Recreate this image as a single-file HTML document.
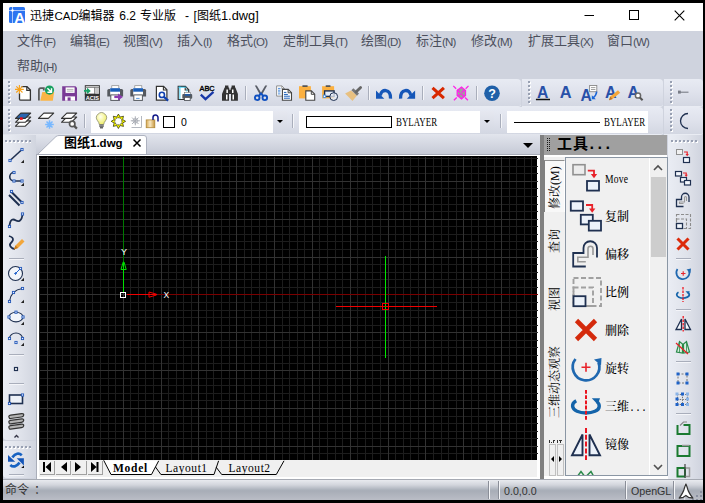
<!DOCTYPE html><html lang="zh-CN"><head><meta charset="utf-8"><title>迅捷CAD编辑器 6.2 专业版 - [图纸1.dwg]</title><style>
html,body{margin:0;padding:0}
body{width:705px;height:503px;background:#000;position:relative;overflow:hidden;font-family:"Liberation Sans","Noto Sans CJK SC",sans-serif;font-size:12px;color:#000}
body>*, #plist>*{position:absolute}
.i{position:absolute;overflow:visible}
#win{left:3px;top:3px;width:700px;height:497px;background:#cfd3de}
#title{left:3px;top:3px;width:700px;height:28px;background:#fff}
#ttext{left:0;top:7px;width:300px;height:18px}
#ttext span{position:absolute;top:0;line-height:18px;white-space:pre;color:#000}
#menu{left:3px;top:31px;width:700px;height:48px;background:#cfd3de}
.mi{font-size:13px;line-height:16px;color:#4b4f5c;white-space:nowrap}
.mi span{font-size:11.500px;letter-spacing:-.8px;position:relative;top:.5px}
.tb{background:linear-gradient(#e8ebf3,#dfe2ec 50%,#d3d7e2);border-radius:0 4px 3px 0;box-shadow:0 1px 0 #e9ecf3}
.gv{width:3px;height:23px;background:repeating-linear-gradient(#98a0b2 0 2px,transparent 2px 4px) 0 0/2px 100% no-repeat,repeating-linear-gradient(transparent 0 1px,#fff 1px 3px,transparent 3px 4px) 1px 0/2px 100% no-repeat}
.gh{height:3px;background:repeating-linear-gradient(90deg,#98a0b2 0 2px,transparent 2px 4px) 0 0/100% 2px no-repeat,repeating-linear-gradient(90deg,transparent 0 1px,#fff 1px 3px,transparent 3px 4px) 0 1px/100% 2px no-repeat}
.sv{width:1px;height:14px;background:#a9aebb;box-shadow:1px 0 0 #f4f5f9}
.sh{width:15px;height:1px;background:#a9aebb;box-shadow:0 1px 0 #f4f5f9}
.combo{top:111px;height:22px;background:#fff}
.combo .dd{position:absolute;right:0;top:0;width:14px;height:22px;background:linear-gradient(#e6e8f0,#d4d8e3)}
.combo .dd::after{content:"";position:absolute;left:4px;top:9px;border:3px solid transparent;border-top:3px solid #000;border-bottom:0}
.sq{border:1px solid #000;background:#fff}
.ct{white-space:nowrap;line-height:14px}
.by{font-family:"Liberation Serif",serif;font-size:12px;transform:scaleX(.74);transform-origin:0 0}
#tabstrip{left:3px;top:134px;width:538px;height:21px;background:linear-gradient(#e2e5ed,#c6cad6);border-bottom:1px solid #a8acb8;box-sizing:border-box}
#tabtxt{left:64px;top:134px;font-weight:bold;font-size:13px;line-height:17px;white-space:nowrap}
#tabtxt span{font-size:11.5px}
.ltb{background:linear-gradient(90deg,#eaedf4,#dfe2ea 55%,#d1d5df);border-radius:0 0 4px 4px}
#cvwrap{left:36px;top:155px;width:505px;height:324px;background:#fff;border-left:1px solid #aaaeb9;box-sizing:border-box}
#ltabs{left:39px;top:460px;width:498px;height:17px;background:#f0f0f0}
.nb{top:460px;width:15px;height:14px;background:#f0f0f0;box-shadow:1px 1px 0 #a0a0a0}
.lt{top:462px;font-family:"Liberation Serif",serif;font-size:11.5px;line-height:13px;letter-spacing:.55px;white-space:nowrap}
.lt.b{font-weight:bold;letter-spacing:.75px}
#split{left:540px;top:135px;width:4px;height:344px;background:#808080}
#phead{left:544px;top:135px;width:123px;height:20px;background:#a0a0a0}
.gv2{width:3px;height:12px;background:repeating-linear-gradient(#222 0 1px,transparent 1px 2px),repeating-linear-gradient(90deg,#222 0 1px,transparent 1px 2px);background-blend-mode:normal}
#ptitle{left:557px;top:134px;font-weight:bold;font-size:15px;line-height:20px;letter-spacing:1px;white-space:nowrap}
#ptitle span{font-family:"Liberation Mono",monospace;font-size:16px;letter-spacing:-1.600px;margin-left:-2px}
#pbody{left:544px;top:155px;width:123px;height:324px;background:#f0f0f0;border-top:2px solid #fff;box-sizing:border-box}
#vtabs{left:544px;top:157px;width:21px;height:321px;background:#f0f0f0;border-right:1px solid #8a96a4}
#vsel{left:544px;top:160px;width:21px;height:52px;background:#f8f8f8;border-top:1px solid #909090;border-left:1.500px solid #808080;border-right:1.500px solid #fff;box-sizing:border-box}
.vt{height:14px;line-height:14px;white-space:nowrap;text-align:center;transform:rotate(-90deg);font-family:"Liberation Serif","Noto Serif CJK SC",serif;font-size:12px}
.vsb{top:444px;width:7px;height:32px;background:#f0f0f0;border:1px solid #c0c0c0;box-sizing:border-box}
#plist{left:0;top:0;width:705px;height:477px;clip-path:inset(158px 55px 2px 566px)}
.pl{left:605px;font-family:"Liberation Serif","Noto Serif CJK SC",serif;font-weight:500;font-size:12px;line-height:14px;white-space:nowrap}
.pl.lat{font-size:12px;transform:scaleX(.8);transform-origin:0 0;letter-spacing:.3px}
#sbar{left:649px;top:158px;width:17px;height:317px;background:#f0f0f0;border-left:1px solid #fff}
#sthumb{left:651px;top:177px;width:15px;height:80px;background:#cdcdcd}
.rtb{left:668px;top:135px;width:35px;height:344px;background:linear-gradient(90deg,#eaedf4,#dfe2ea 55%,#cfd3de)}
#status{left:3px;top:479px;width:700px;height:21px;background:linear-gradient(#a6aab3 0,#a6aab3 1.500px,#e6e8ed 1.500px,#d2d5dc 6px,#aab0ba 11px,#a8adb7 12px,#babdc6 21px)}
.st{top:484px;font-size:10.67px;line-height:14px;color:#333;white-space:nowrap}
.ss{top:481px;width:1px;height:18px;background:#8a8e98;box-shadow:1px 0 0 #f4f5f8}
.dots{font-family:"Liberation Mono",monospace;font-size:10px;font-weight:400}

</style></head><body>
<div id="win"></div>
<div id="title"></div>
<svg class="i" style="left:9px;top:7px" width="16" height="16" viewBox="0 0 16 16"><rect x="0" y="0" width="16" height="16" rx="1.500" fill="#2b74f0"/><path d="M3.500 0v16" stroke="#cfe0ff" stroke-width=".8"/><path d="M0 3.500h16" stroke="#cfe0ff" stroke-width=".8"/><circle cx="3.500" cy="3.500" r="1.200" fill="#fff"/><text x="10.600" y="16" font-family="Liberation Sans,sans-serif" font-size="15" font-weight="bold" fill="#fff" text-anchor="middle">A</text></svg>
<div id="ttext"><span style="left:30px;font-size:12px">迅捷</span><span style="left:54.5px;font-size:11.5px">CAD</span><span style="left:78.5px;font-size:12px">编辑器 </span><span style="left:119.3px;font-size:12px">6.2 </span><span style="left:140px;font-size:12px">专业版 </span><span style="left:185px;font-size:12px">- </span><span style="left:193.5px;font-size:12px">[</span><span style="left:197px;font-size:12px">图纸</span><span style="left:221px;font-size:12.8px">1.dwg]</span></div>
<svg class="i" style="left:575px;top:3px" width="128" height="28" viewBox="0 0 128 28"><path d="M9.500 12.500h9.500" stroke="#000" fill="none"/><rect x="54.500" y="7.500" width="9" height="9" stroke="#000" fill="none"/><path d="M99.700 7.700l9.600 9.600M109.300 7.700L99.700 17.300" stroke="#000" stroke-width="1.100" fill="none"/></svg>
<div id="menu"></div>
<div class="mi" style="left:17px;top:33px">文件<span>(F)</span></div>
<div class="mi" style="left:70px;top:33px">编辑<span>(E)</span></div>
<div class="mi" style="left:123px;top:33px">视图<span>(V)</span></div>
<div class="mi" style="left:177px;top:33px">插入<span>(I)</span></div>
<div class="mi" style="left:227px;top:33px">格式<span>(O)</span></div>
<div class="mi" style="left:283px;top:33px">定制工具<span>(T)</span></div>
<div class="mi" style="left:361px;top:33px">绘图<span>(D)</span></div>
<div class="mi" style="left:416px;top:33px">标注<span>(N)</span></div>
<div class="mi" style="left:471px;top:33px">修改<span>(M)</span></div>
<div class="mi" style="left:528px;top:33px">扩展工具<span>(X)</span></div>
<div class="mi" style="left:607px;top:33px">窗口<span>(W)</span></div>
<div class="mi" style="left:17px;top:58px">帮助<span>(H)</span></div>
<div class="tb" style="left:3px;top:79px;width:517.500px;height:27px"></div>
<div class="tb" style="left:521.500px;top:79px;width:141px;height:27px"></div>
<div class="tb" style="left:663.500px;top:79px;width:39.500px;height:27px"></div>
<div class="tb" style="left:3px;top:107px;width:659.500px;height:27px"></div>
<div class="tb" style="left:663.500px;top:107px;width:39.500px;height:27px"></div>
<div class="gv" style="left:8px;top:81px"></div>
<div class="gv" style="left:528px;top:81px"></div>
<div class="gv" style="left:670px;top:81px"></div>
<div class="gv" style="left:8px;top:109px"></div>
<div class="gv" style="left:670px;top:109px"></div>
<svg class="i" style="left:15px;top:85px" width="16" height="16" viewBox="0 0 16 16"><path d="M6.500 1.700h5.500l3.400 3.400v10.100h-9.600q-1.300 0-1.300-1.300V8" fill="#fff" stroke="#333" stroke-width="1.300"/><path d="M11.800 1.700v3.600h3.600" fill="none" stroke="#333" stroke-width="1.200"/><path d="M4.400 0v8.800M0 4.400h8.800M1.300 1.300l6.200 6.200M7.500 1.300L1.300 7.500" stroke="#f7a21b" stroke-width="1.100"/></svg>
<svg class="i" style="left:38px;top:85px" width="16" height="16" viewBox="0 0 16 16"><path d="M0.900 15.400V5q0-1.900 1.900-1.900H5.800V5.600" fill="none" stroke="#5a5a5a" stroke-width="1.800"/><path d="M2.300 15.700L4.300 7H16.200l-1.400 8.700z" fill="#fbb445"/><circle cx="11.500" cy="5.100" r="4.600" fill="#18a060"/><path d="M9.400 3.200l3.600 3.600M13.500 3.200v4.100H9.400" stroke="#fff" stroke-width="1.400" fill="none"/></svg>
<svg class="i" style="left:61px;top:85px" width="16" height="16" viewBox="0 0 16 16"><path d="M1.200 1.200H14.500L16 2.700V15.700H1.200z" fill="#7a3a96"/><rect x="4.600" y="2.400" width="9" height="5.500" fill="#fff"/><path d="M5.800 4.400h6.600M5.800 6.100h6.600" stroke="#aaa" stroke-width=".9"/><rect x="4.100" y="11.400" width="9.900" height="4.300" fill="#fff"/><rect x="6.600" y="12.400" width="3" height="3.300" fill="#7a3a96"/></svg>
<svg class="i" style="left:84px;top:85px" width="16" height="16" viewBox="0 0 16 16"><rect x="1.300" y="0.700" width="14.100" height="8.500" fill="#fff" stroke="#333" stroke-width="1"/><path d="M1.300 2.300h14.100" stroke="#777" stroke-width="1"/><rect x="11.400" y="3" width="3.600" height="5.700" fill="#c8c8c8"/><path d="M10.700 2.500v6.500" stroke="#555" stroke-width=".8"/><path d="M0 5.900h4.300M2.900 3.600l2.600 2.300-2.600 2.300" stroke="#1aa268" stroke-width="1.700" fill="none"/><rect x="0.800" y="8.900" width="15.100" height="6.800" fill="#333"/><text x="8.400" y="14.800" font-family="Liberation Sans,sans-serif" font-size="6.200" font-weight="bold" fill="#fff" text-anchor="middle" textLength="13.400" lengthAdjust="spacingAndGlyphs">ACIS</text></svg>
<svg class="i" style="left:107px;top:85px" width="16" height="16" viewBox="0 0 16 16"><rect x="4.800" y="0.700" width="7" height="3" fill="#fff" stroke="#888" stroke-width=".7"/><path d="M0.300 11.400V5.400q0-1.500 1.500-1.500H14.600q1.500 0 1.500 1.500V11.400z" fill="#55595f"/><rect x="3.200" y="3.200" width="9.800" height="7" fill="#fff"/><rect x="3.200" y="3.200" width="9.800" height="3.500" fill="#1a5eb8"/><rect x="3.8" y="9.900" width="8.6" height="5.500" fill="#fff" stroke="#55595f" stroke-width="1"/><path d="M7.300 11.900h5.500" stroke="#8a3ab0" stroke-width="2.400"/><path d="M11 8.400l4.900 3.500-4.900 3.500z" fill="#8a3ab0"/></svg>
<svg class="i" style="left:130px;top:85px" width="16" height="16" viewBox="0 0 16 16"><rect x="4.800" y="0.700" width="7" height="3" fill="#fff" stroke="#888" stroke-width=".7"/><path d="M0.300 11.400V5.400q0-1.500 1.500-1.500H14.600q1.500 0 1.500 1.500V11.400z" fill="#55595f"/><rect x="3.200" y="3.200" width="9.800" height="7" fill="#fff"/><rect x="3.200" y="3.200" width="9.800" height="3.500" fill="#1a5eb8"/><rect x="3.8" y="9.900" width="8.6" height="5.500" fill="#fff" stroke="#55595f" stroke-width="1"/><path d="M6.100 13.400h3.500" stroke="#5a9ae0" stroke-width="1"/></svg>
<svg class="i" style="left:153px;top:85px" width="16" height="16" viewBox="0 0 16 16"><path d="M3.400 1.400h7.200l3.300 3.400v10.300H3.400z" fill="#fff" stroke="#333" stroke-width="1.200"/><path d="M10.400 1.400v3.600h3.500" fill="none" stroke="#333" stroke-width="1.100"/><circle cx="8.900" cy="9.900" r="2.600" fill="#fff" stroke="#1040b0" stroke-width="1.600"/><path d="M10.900 11.900l4.300 3.700" stroke="#1040b0" stroke-width="2.100"/></svg>
<svg class="i" style="left:176px;top:85px" width="16" height="16" viewBox="0 0 16 16"><path d="M2.200 1.400h7.200l3.300 3.400v9.700H2.200z" fill="#fff" stroke="#333" stroke-width="1.200"/><path d="M9.200 1.400v3.600h3.500" fill="none" stroke="#333" stroke-width="1.100"/><path d="M3.900 1.400V14.200M2.400 2.200h8M10.800 4.500v2" stroke="#30c8f0" stroke-width=".9" fill="none"/><rect x="8.300" y="7.400" width="6" height="2.500" fill="#fff" stroke="#777" stroke-width=".6"/><rect x="6.300" y="9" width="9.900" height="4.800" rx="1" fill="#55595f"/><rect x="8.800" y="9.200" width="5.400" height="1.500" fill="#1a5eb8"/><rect x="8.500" y="12.400" width="5.700" height="3.100" fill="#fff" stroke="#55595f" stroke-width=".9"/></svg>
<svg class="i" style="left:199px;top:85px" width="16" height="16" viewBox="0 0 16 16"><text x="8.100" y="5.500" font-family="Liberation Sans,sans-serif"  font-size="7" fill="#000" stroke="#000" stroke-width=".35" text-anchor="middle" textLength="15.200" lengthAdjust="spacingAndGlyphs">ABC</text><path d="M1.800 9.600l4.700 4.500 8-7.200" stroke="#1838a8" stroke-width="2.300" fill="none"/></svg>
<svg class="i" style="left:222px;top:85px" width="16" height="16" viewBox="0 0 16 16"><path d="M3 .5h3.400v2.500H3zM9.600 .5H13v2.500H9.600z" fill="#333"/><path d="M2.600 2.500h4.400l.6 2.500h.8l.6-2.500h4.400L15.900 9v6.700H9V9H7v6.700H0V9z" fill="#333"/><path d="M4.400 4.500h1.500V8H4.400zM10 4.500h1.500V8H10zM4 9.500h1.500v5H4zM10.500 9.500H12v5h-1.500z" fill="#fff"/></svg>
<div class="sv" style="left:245px;top:86px"></div>
<svg class="i" style="left:253px;top:85px" width="16" height="16" viewBox="0 0 16 16"><path d="M1.800 .5h2l5.600 9.500-2 .5zM14.200 .5h-2L6.600 10l2 .5z" fill="#5a5e68"/><circle cx="4.200" cy="12.800" r="2.300" fill="none" stroke="#1050c0" stroke-width="1.900"/><circle cx="11.800" cy="12.800" r="2.300" fill="none" stroke="#1050c0" stroke-width="1.900"/><path d="M5.500 11.200L8 8.500l2.500 2.700" stroke="#1050c0" stroke-width="1.900" fill="none"/></svg>
<svg class="i" style="left:276px;top:85px" width="16" height="16" viewBox="0 0 16 16"><path d="M0.600 0.900h5.300l2.500 2.500v7.700H0.600z" fill="#fff" stroke="#888" stroke-width=".9"/><path d="M5.800 .9v2.600h2.600" fill="none" stroke="#888" stroke-width=".8"/><path d="M2 3.400h2.500M2 5.200h2.500M2 6.900h2.500M2 8.900h2.500" stroke="#3a80d8" stroke-width=".9"/><path d="M6.400 4.400h5.800l3.300 3.300v7.600H6.400z" fill="#fff" stroke="#444" stroke-width="1.100"/><path d="M12.100 4.400v3.400h3.400" fill="none" stroke="#444" stroke-width="1"/><path d="M7.900 7.400h2.500M7.900 9.400h4M7.900 11.200h6M7.900 13.200h6" stroke="#1a5eb8" stroke-width="1"/></svg>
<svg class="i" style="left:299px;top:85px" width="16" height="16" viewBox="0 0 16 16"><rect x="0" y="1.200" width="11.900" height="12.200" fill="#fbb040"/><rect x="3.300" y="0.200" width="5.400" height="1.700" rx=".6" fill="#555"/><path d="M6.800 5.900h5.600l3.300 3.300v6.100H6.800z" fill="#fff" stroke="#444" stroke-width="1.100"/><path d="M12.300 5.900v3.400h3.400" fill="none" stroke="#444" stroke-width="1"/></svg>
<svg class="i" style="left:322px;top:85px" width="16" height="16" viewBox="0 0 16 16"><rect x="0.100" y="1.200" width="12" height="12.200" fill="#fbb040"/><rect x="3.600" y="0.200" width="5" height="1.700" rx=".6" fill="#555"/><rect x="2.600" y="5.900" width="9.500" height="5.500" fill="#e8eef8" stroke="#1f3050" stroke-width="1.400"/><circle cx="11.700" cy="11.600" r="3.900" fill="#e8eef8" fill-opacity=".75" stroke="#1f3050" stroke-width="1"/><rect x="1.300" y="10.100" width="2.400" height="2.400" fill="#fff" stroke="#4a90e0" stroke-width=".9"/></svg>
<svg class="i" style="left:345px;top:85px" width="16" height="16" viewBox="0 0 16 16"><path d="M6 5.600L0.100 8.600 7.500 16 12 10.600z" fill="#e8c080"/><path d="M6.400 5.200L8.400 3.300 14 8.500 12 10.800z" fill="#777"/><path d="M11.200 6.800L15.600 2.400" stroke="#666" stroke-width="2.800" stroke-linecap="round"/></svg>
<div class="sv" style="left:368px;top:86px"></div>
<svg class="i" style="left:376px;top:85px" width="16" height="16" viewBox="0 0 16 16"><path d="M0 5.600v8.100h8.300z" fill="#1556b8"/><path d="M4.300 10.500C5 3.500 15 3.200 14.500 13.700" fill="none" stroke="#1556b8" stroke-width="3.300"/></svg>
<svg class="i" style="left:399px;top:85px" width="16" height="16" viewBox="0 0 16 16"><g transform="translate(16.100 0) scale(-1 1)"><path d="M0 5.600v8.100h8.300z" fill="#1556b8"/><path d="M4.300 10.500C5 3.500 15 3.200 14.500 13.700" fill="none" stroke="#1556b8" stroke-width="3.300"/></g></svg>
<div class="sv" style="left:422px;top:86px"></div>
<svg class="i" style="left:430px;top:85px" width="16" height="16" viewBox="0 0 16 16"><path d="M2.500 2.900l11.400 10.300M13.900 2.900L2.500 13.200" stroke="#d82800" stroke-width="3.100" fill="none"/></svg>
<svg class="i" style="left:453px;top:85px" width="16" height="16" viewBox="0 0 16 16"><path d="M4.200 5.500l4.300-3.300 4 3.300v5l-4 3.300-4.300-3.300z" fill="#a0a0a0" stroke="#ff22e8" stroke-width="1.300"/><path d="M0.300 0.900l15.200 15M15.500 .9L0.300 15.900" stroke="#ff22e8" stroke-width="1.300" stroke-dasharray="4 1.500" fill="none"/></svg>
<div class="sv" style="left:476px;top:86px"></div>
<svg class="i" style="left:484px;top:85px" width="16" height="16" viewBox="0 0 16 16"><circle cx="8" cy="8.200" r="7.800" fill="#2060a8"/><text x="8" y="12.800" font-family="Liberation Sans,sans-serif" font-size="12.500" font-weight="bold" fill="#fff" text-anchor="middle">?</text></svg>
<svg class="i" style="left:535px;top:85px" width="16" height="16" viewBox="0 0 16 16"><text x="7.7" y="12.6" font-family="Liberation Sans,sans-serif" font-size="15.8" font-weight="bold" fill="#2850a8" text-anchor="middle">A</text><path d="M0.900 14.500h14.100" stroke="#111" stroke-width="1.500"/></svg>
<svg class="i" style="left:558px;top:85px" width="16" height="16" viewBox="0 0 16 16"><text x="7.6" y="13" font-family="Liberation Sans,sans-serif" font-size="16.4" font-weight="bold" fill="#2850a8" text-anchor="middle">A</text></svg>
<svg class="i" style="left:581px;top:85px" width="16" height="16" viewBox="0 0 16 16"><text x="5.1" y="16" font-family="Liberation Sans,sans-serif" font-size="15.6" font-weight="bold" fill="#2850a8" text-anchor="middle">A</text><rect x="8.600" y="0.500" width="7.200" height="6.200" fill="#fff" stroke="#888" stroke-width=".9"/><path d="M10 2.600h4.400M10 4.500h4.400" stroke="#888" stroke-width=".8"/><path d="M15.700 6.600Q15.500 10 12 13" stroke="#1a66d8" stroke-width="1.500" fill="none"/><path d="M10.800 10.200v4h4z" fill="#1a66d8"/></svg>
<svg class="i" style="left:604px;top:85px" width="16" height="16" viewBox="0 0 16 16"><text x="6.8" y="12.5" font-family="Liberation Sans,sans-serif" font-size="16" font-weight="bold" fill="#2850a8" text-anchor="middle">A</text><path d="M5 15.200l1.300-3.600 7.700-6.400 2.200 2.600-7.700 6.300z" fill="#f5a73a"/><path d="M5 15.200l1.300-3.600 2.200 2.500z" fill="#b8722a"/></svg>
<svg class="i" style="left:627px;top:85px" width="16" height="16" viewBox="0 0 16 16"><text x="6.3" y="12.5" font-family="Liberation Sans,sans-serif" font-size="16" font-weight="bold" fill="#2850a8" text-anchor="middle">A</text><circle cx="11" cy="10.500" r="2.600" fill="#fff" stroke="#666" stroke-width="1.500"/><path d="M12.900 12.500l2.700 2.800" stroke="#555" stroke-width="2"/></svg>
<svg class="i" style="left:677px;top:85px" width="16" height="16" viewBox="0 0 16 16"><rect x="1" y="5.600" width="2.800" height="3" fill="#787c86"/><path d="M3 7.200h8.500" stroke="#787c86" stroke-width="1.100"/></svg>
<svg class="i" style="left:677px;top:113px" width="16" height="16" viewBox="0 0 16 16"><path d="M11 .5A7.500 7.500 0 0 0 11 15.500" fill="none" stroke="#1f3050" stroke-width="1.300"/></svg>
<svg class="i" style="left:15px;top:112px" width="16" height="16" viewBox="0 0 16 16"><path d="M0.500 14.2 L5.800 8.9 H15.700 L10.300 14.2 z" fill="#fff" stroke="#333" stroke-width="1.100" stroke-linejoin="round"/><path d="M0.500 10.3 L5.800 5 H15.700 L10.300 10.3 z" fill="#fff" stroke="#333" stroke-width="1.100" stroke-linejoin="round"/><path d="M0.500 6.4 L5.800 1.1 H15.700 L10.300 6.4 z" fill="#2a66b0" stroke="#333" stroke-width="1.100" stroke-linejoin="round"/><rect x="5" y="5.300" width="2.700" height="2.600" fill="#e8101c"/></svg>
<svg class="i" style="left:38px;top:112px" width="16" height="16" viewBox="0 0 16 16"><path d="M0.500 6.4 L5.800 1.1 H15.700 L10.300 6.4 z" fill="#fff" stroke="#333" stroke-width="1.100" stroke-linejoin="round"/><path d="M11.500 8.200v8.600M7.200 12.500h8.600M8.500 9.500l6 6M14.500 9.500l-6 6" stroke="#78b8ff" stroke-width="1.500"/></svg>
<svg class="i" style="left:61px;top:112px" width="16" height="16" viewBox="0 0 16 16"><path d="M0.500 10.3 L5.800 5 H15.700 L10.300 10.3 z" fill="#fff" stroke="#333" stroke-width="1.100" stroke-linejoin="round"/><path d="M0.500 6.4 L5.800 1.1 H15.700 L10.300 6.4 z" fill="#fff" stroke="#333" stroke-width="1.100" stroke-linejoin="round"/><circle cx="11.200" cy="11.900" r="2.700" fill="#fff" stroke="#555" stroke-width="1.700"/><path d="M13.200 13.900l2.700 2.700" stroke="#555" stroke-width="2.200"/></svg>
<div class="sv" style="left:84px;top:114px"></div>
<div class="combo" style="left:91px;width:196px"><div class="dd"></div></div>
<svg class="i" style="left:93px;top:113px" width="16" height="16" viewBox="0 0 16 16"><defs><radialGradient id="bg1" cx=".4" cy=".35" r=".7"><stop offset="0" stop-color="#fffff0"/><stop offset="1" stop-color="#eeee60"/></radialGradient></defs><path d="M6.300 11.500Q6 9.300 4.500 7.700A5 5 0 1 1 12.500 7.700Q11 9.300 10.700 11.500z" fill="url(#bg1)" stroke="#8a8a70" stroke-width=".8"/><rect x="6.300" y="11.500" width="4.400" height="2.600" fill="#666"/><path d="M6.300 12.800h4.400" stroke="#bbb" stroke-width=".6"/><path d="M7 14.800h3" stroke="#444" stroke-width="1.200"/></svg>
<svg class="i" style="left:110px;top:113px" width="16" height="16" viewBox="0 0 16 16"><path d="M8.40 1.10 L10.16 4.05 L13.49 3.21 L12.65 6.54 L15.60 8.30 L12.65 10.06 L13.49 13.39 L10.16 12.55 L8.40 15.50 L6.64 12.55 L3.31 13.39 L4.15 10.06 L1.20 8.30 L4.15 6.54 L3.31 3.21 L6.64 4.05 z" fill="#ffff00" stroke="#202000" stroke-width=".7"/><circle cx="8.400" cy="8.300" r="3.600" fill="#fffff4" stroke="#111" stroke-width=".9" stroke-dasharray="1 .6"/></svg>
<svg class="i" style="left:128px;top:113px" width="16" height="16" viewBox="0 0 16 16"><path d="M13.500 3v11.500H3.500" fill="none" stroke="#b4b8c0" stroke-width="1"/><path d="M7.300 3.300v9M2.800 7.800h9M4.100 4.600l6.400 6.400M10.500 4.600l-6.400 6.400" stroke="#a8acb4" stroke-width="1"/><circle cx="7.300" cy="7.800" r="2.300" fill="none" stroke="#a8acb4" stroke-width=".8"/></svg>
<svg class="i" style="left:145px;top:113px" width="16" height="16" viewBox="0 0 16 16"><defs><linearGradient id="lg1" x1="0" x2="1"><stop offset="0" stop-color="#d8a850"/><stop offset=".45" stop-color="#f8e8c4"/><stop offset="1" stop-color="#c89840"/></linearGradient></defs><rect x="1.200" y="6.900" width="8.600" height="7.800" fill="url(#lg1)" stroke="#b08838" stroke-width=".8"/><path d="M8 7V4.600A2.500 2.500 0 0 1 13 4.600V8.600" fill="none" stroke="#101888" stroke-width="1.500"/></svg>
<div class="sq" style="left:163px;top:116px;width:10px;height:10px"></div>
<div class="ct" style="left:181px;top:115px;font-size:10.500px">0</div>
<div class="sv" style="left:292px;top:114px"></div>
<div class="combo" style="left:299px;width:195px"><div class="dd"></div></div>
<div class="sq" style="left:306px;top:116px;width:84px;height:10px"></div>
<div class="ct by" style="left:396px;top:115px">BYLAYER</div>
<div class="sv" style="left:500px;top:114px"></div>
<div class="combo" style="left:507px;width:141px"></div>
<div style="position:absolute;left:514px;top:122px;width:86px;height:1px;background:#000"></div>
<div class="ct by" style="left:604px;top:115px">BYLAYER</div>
<div id="tabstrip"></div>
<svg class="i" style="left:34px;top:134px" width="120" height="22" viewBox="0 0 120 22"><path d="M4 20 L22 2.5 Q23.5 1.5 25 1.5 H110 Q112.5 1.5 112.5 4 V20" fill="#fff" stroke="#aeb3c0"/><path d="M99.5 5.5l7 7M106.5 5.5l-7 7" stroke="#000" stroke-width="1.5" fill="none"/></svg>
<div id="tabtxt">图纸<span>1.dwg</span></div>
<svg class="i" style="left:522px;top:142px" width="12" height="7" viewBox="0 0 12 7"><path d="M1 1h10L6 6z" fill="#000"/></svg>
<div class="ltb" style="left:3px;top:135px;width:33px;height:305px"></div>
<div class="ltb" style="left:3px;top:441px;width:33px;height:37px"></div>
<div class="gh" style="left:5px;top:140px;width:26px"></div>
<div class="gh" style="left:5px;top:446px;width:26px"></div>
<svg class="i" style="left:8px;top:147px" width="16" height="16" viewBox="0 0 16 16"><path d="M2 13.500L14 2.500" stroke="#1f3050" stroke-width="1.600"/><rect x="0.9" y="12.4" width="2.200" height="2.200" fill="#eaf2ff" stroke="#2458b8" stroke-width=".9"/><rect x="12.9" y="1.4" width="2.200" height="2.200" fill="#eaf2ff" stroke="#2458b8" stroke-width=".9"/><path d="M16 12.800V16h-3.200z" fill="#222"/></svg>
<svg class="i" style="left:8px;top:170px" width="16" height="16" viewBox="0 0 16 16"><path d="M6 2.500A4.200 4.200 0 0 0 6 11H14" fill="none" stroke="#1f3050" stroke-width="1.600"/><rect x="4.9" y="1.4" width="2.200" height="2.200" fill="#eaf2ff" stroke="#2458b8" stroke-width=".9"/><rect x="4.9" y="9.9" width="2.200" height="2.200" fill="#eaf2ff" stroke="#2458b8" stroke-width=".9"/><rect x="12.9" y="9.9" width="2.200" height="2.200" fill="#eaf2ff" stroke="#2458b8" stroke-width=".9"/><path d="M16 12.800V16h-3.200z" fill="#222"/></svg>
<svg class="i" style="left:8px;top:190px" width="16" height="16" viewBox="0 0 16 16"><path d="M3 1.500L14.500 13M1 5l10.500 10.500" stroke="#1f3050" stroke-width="2"/><rect x="2.4" y="0.4" width="2.200" height="2.200" fill="#eaf2ff" stroke="#2458b8" stroke-width=".9"/><rect x="12.9" y="11.4" width="2.200" height="2.200" fill="#eaf2ff" stroke="#2458b8" stroke-width=".9"/></svg>
<svg class="i" style="left:8px;top:212px" width="16" height="16" viewBox="0 0 16 16"><path d="M1.500 14.500C2 6 5.500 7 8 8.500S14 9 14.500 2" fill="none" stroke="#1f3050" stroke-width="1.800"/><rect x="0.4" y="13.4" width="2.200" height="2.200" fill="#eaf2ff" stroke="#2458b8" stroke-width=".9"/><rect x="13.4" y="0.9" width="2.200" height="2.200" fill="#eaf2ff" stroke="#2458b8" stroke-width=".9"/></svg>
<svg class="i" style="left:8px;top:234px" width="16" height="16" viewBox="0 0 16 16"><path d="M1 2C8 4 4 8 2.500 9.500S3 15 7 15" fill="none" stroke="#1f3050" stroke-width="1.800"/><path d="M6 15.500l1.500-4L14 5l2.500 2.500L10 14z" fill="#f2a63a"/><path d="M6 15.500l1.500-4L10 14z" fill="#c47a20"/></svg>
<div class="sh" style="left:9px;top:258px"></div>
<svg class="i" style="left:8px;top:265px" width="16" height="16" viewBox="0 0 16 16"><circle cx="7.500" cy="8.500" r="7" fill="#f2f5fa" stroke="#1f3050" stroke-width="1.100"/><path d="M7.500 8.500l5-5" stroke="#2060c8"/><path d="M6 8.500h3M7.500 7v3" stroke="#2060c8" stroke-width=".8"/><rect x="11.4" y="2.4" width="2.200" height="2.200" fill="#eaf2ff" stroke="#2458b8" stroke-width=".9"/><path d="M16 12.800V16h-3.200z" fill="#222"/></svg>
<svg class="i" style="left:8px;top:287px" width="16" height="16" viewBox="0 0 16 16"><path d="M1.500 14.500Q3 3 14.500 1.500" fill="none" stroke="#1f3050" stroke-width="1.250"/><rect x="0.4" y="13.4" width="2.200" height="2.200" fill="#eaf2ff" stroke="#2458b8" stroke-width=".9"/><rect x="4.4" y="4.4" width="2.200" height="2.200" fill="#eaf2ff" stroke="#2458b8" stroke-width=".9"/><rect x="13.4" y="0.4" width="2.200" height="2.200" fill="#eaf2ff" stroke="#2458b8" stroke-width=".9"/><path d="M16 12.800V16h-3.200z" fill="#222"/></svg>
<svg class="i" style="left:8px;top:309px" width="16" height="16" viewBox="0 0 16 16"><ellipse cx="8" cy="8" rx="7" ry="4.800" fill="#f2f5fa" stroke="#1f3050" stroke-width="1.150"/><rect x="-0.1" y="6.9" width="2.200" height="2.200" fill="#eaf2ff" stroke="#2458b8" stroke-width=".9"/><rect x="6.9" y="2.1" width="2.200" height="2.200" fill="#eaf2ff" stroke="#2458b8" stroke-width=".9"/><rect x="13.9" y="6.9" width="2.200" height="2.200" fill="#eaf2ff" stroke="#2458b8" stroke-width=".9"/><path d="M16 12.800V16h-3.200z" fill="#222"/></svg>
<svg class="i" style="left:8px;top:330px" width="16" height="16" viewBox="0 0 16 16"><path d="M1.500 8.500A6.500 5.500 0 0 1 14.500 8.500" fill="none" stroke="#1f3050" stroke-width="1.200"/><rect x="0.4" y="7.4" width="2.200" height="2.200" fill="#eaf2ff" stroke="#2458b8" stroke-width=".9"/><rect x="13.4" y="7.4" width="2.200" height="2.200" fill="#eaf2ff" stroke="#2458b8" stroke-width=".9"/><rect x="6.9" y="11.4" width="2.200" height="2.200" fill="#eaf2ff" stroke="#2458b8" stroke-width=".9"/><path d="M16 12.800V16h-3.200z" fill="#222"/></svg>
<div class="sh" style="left:9px;top:354px"></div>
<svg class="i" style="left:8px;top:361px" width="16" height="16" viewBox="0 0 16 16"><rect x="6.500" y="6.500" width="3" height="3" fill="#fff" stroke="#1f3050" stroke-width="1.200"/></svg>
<div class="sh" style="left:9px;top:383px"></div>
<svg class="i" style="left:8px;top:391px" width="16" height="16" viewBox="0 0 16 16"><rect x="1.500" y="4" width="13" height="8.500" fill="#eef2f8" stroke="#1f3050" stroke-width="1.600"/><rect x="0.4" y="11.4" width="2.200" height="2.200" fill="#eaf2ff" stroke="#2458b8" stroke-width=".9"/><rect x="13.4" y="2.9" width="2.200" height="2.200" fill="#eaf2ff" stroke="#2458b8" stroke-width=".9"/></svg>
<svg class="i" style="left:8px;top:413px" width="16" height="16" viewBox="0 0 16 16"><path d="M1.200 4.6 Q0 2.5 2.600 2.1 L13.800 0.6 Q16.200 0.5 15.600 2.4 Q15.400 3.7 13.400 4 L2.600 5.5 Q1.200 5.7 1.200 4.6 z M1.200 9.9 Q0 7.8 2.600 7.4 L13.800 5.9 Q16.200 5.8 15.600 7.7 Q15.400 9 13.400 9.3 L2.600 10.8 Q1.200 11 1.200 9.9 z M1.200 15.2 Q0 13.1 2.600 12.7 L13.800 11.2 Q16.200 11.1 15.600 13 Q15.400 14.3 13.400 14.6 L2.600 16.1 Q1.200 16.3 1.200 15.2 z" fill="#b4b4b4" stroke="#333" stroke-width="1.200" stroke-linejoin="round"/></svg>
<svg class="i" style="left:14px;top:435px" width="5" height="3" viewBox="0 0 5 3"><path d="M.5 2.500l2-2 2 2" stroke="#334" stroke-width="1.300" fill="none"/></svg>
<svg class="i" style="left:8px;top:452px" width="16" height="16" viewBox="0 0 16 16"><path d="M13.800 3.200Q9.300 -0.800 4.300 5.300" fill="none" stroke="#1762c2" stroke-width="2.700"/><path d="M0 3v6.700h7.200z" fill="#1556b8"/><path d="M2.300 12.900Q6.600 16.900 11.600 10.600" fill="none" stroke="#1762c2" stroke-width="2.700"/><path d="M8.700 6.300h7.200v7.100z" fill="#1556b8"/><path d="M16 13.500V16h-2.800z" fill="#111"/></svg>
<div class="sh" style="left:9px;top:474px"></div>
<div id="cvwrap"></div>
<svg class="i" id="cv" style="left:39px;top:156px" width="498" height="304" viewBox="39 156 498 304" shape-rendering="crispEdges"><rect x="39" y="156" width="498" height="304" fill="#000"/><path d="M39 156v304M55 156v304M62 156v304M70 156v304M77 156v304M92 156v304M100 156v304M108 156v304M115 156v304M130 156v304M138 156v304M145 156v304M153 156v304M168 156v304M176 156v304M183 156v304M191 156v304M206 156v304M213 156v304M221 156v304M229 156v304M244 156v304M251 156v304M259 156v304M266 156v304M282 156v304M289 156v304M297 156v304M304 156v304M319 156v304M327 156v304M335 156v304M342 156v304M357 156v304M365 156v304M372 156v304M380 156v304M395 156v304M403 156v304M410 156v304M418 156v304M433 156v304M441 156v304M448 156v304M456 156v304M471 156v304M478 156v304M486 156v304M494 156v304M509 156v304M516 156v304M524 156v304M531 156v304M39 158h498M39 166h498M39 173h498M39 188h498M39 196h498M39 204h498M39 211h498M39 226h498M39 234h498M39 241h498M39 249h498M39 264h498M39 272h498M39 279h498M39 287h498M39 302h498M39 310h498M39 317h498M39 325h498M39 340h498M39 347h498M39 355h498M39 363h498M39 378h498M39 385h498M39 393h498M39 400h498M39 416h498M39 423h498M39 431h498M39 438h498M39 453h498" stroke="#1d1d1d" stroke-width="1" fill="none" transform="translate(.5 .5)"/><path d="M47 156v304M85 156v304M123 156v304M161 156v304M198 156v304M236 156v304M274 156v304M312 156v304M350 156v304M388 156v304M425 156v304M463 156v304M501 156v304M39 181h498M39 219h498M39 257h498M39 294h498M39 332h498M39 370h498M39 408h498M39 446h498" stroke="#323232" stroke-width="1" fill="none" transform="translate(.5 .5)"/><g transform="translate(.5 .5)" fill="none"><path d="M123 156V262" stroke="#007a00"/><path d="M157 294H537" stroke="#7a0000"/><path d="M123 262V292" stroke="#00e000"/><path d="M120.500 269h5.200l-2.200-7.500h-.8z" stroke="#00e000" shape-rendering="auto"/><path d="M126 294h30" stroke="#f00000"/><path d="M148.500 291.500v5.200l7.500-2.200v-.8z" stroke="#f00000" shape-rendering="auto"/><rect x="120" y="292" width="5" height="5" stroke="#fff"/><text x="123.500" y="254.800" font-family="Liberation Sans,sans-serif" font-size="9" fill="#fff" stroke="none" text-anchor="middle" shape-rendering="auto">Y</text><text x="165.800" y="297.800" font-family="Liberation Sans,sans-serif" font-size="8.500" fill="#fff" stroke="none" text-anchor="middle" shape-rendering="auto">X</text><path d="M385 255V357" stroke="#00e800"/><path d="M335 306H436" stroke="#f00000"/><rect x="382" y="303" width="6" height="6" stroke="#f00000"/></g></svg>
<div id="ltabs"></div>
<div class="nb" style="left:39px"></div>
<div class="nb" style="left:55px"></div>
<div class="nb" style="left:71px"></div>
<div class="nb" style="left:87px"></div>
<svg class="i" style="left:39px;top:460px" width="64" height="14" viewBox="0 0 64 14" fill="#000"><path d="M4 2h2v10H4zM12 2v10L6.5 7z"/><path d="M28 2v10L22 7z"/><path d="M36 2v10l6-5z"/><path d="M52 2v10l5.500-5zM57.500 2h2v10h-2z"/></svg>
<svg class="i" style="left:102px;top:460px" width="200" height="16" viewBox="0 0 200 16" fill="none" stroke="#000"><path d="M1.700 .3L9 14.500H49.500L56.700 .8" fill="#fff"/><path d="M53.500 7l5.400 7.500H112L116.600 .8"/><path d="M114 7l5.700 7.500H174.300L182 .8"/></svg>
<div class="lt b" style="left:113px">Model</div><div class="lt" style="left:165.5px">Layout1</div><div class="lt" style="left:228.500px">Layout2</div>
<div id="split"></div><div id="phead"></div><svg class="i" style="left:547px;top:138px" width="3" height="13" viewBox="0 0 3 13"><path d="M0 0h1v1H0zM2 0h1v1H2zM0 2h1v1H0zM2 2h1v1H2zM0 4h1v1H0zM2 4h1v1H2zM0 6h1v1H0zM2 6h1v1H2zM0 8h1v1H0zM2 8h1v1H2zM0 10h1v1H0zM2 10h1v1H2zM0 12h1v1H0zM2 12h1v1H2z" fill="#1a1a1a"/></svg>
<div id="ptitle">工具<span>...</span></div>
<div id="pbody"></div><div id="vtabs"></div><div id="vsel"></div>
<div class="vt" style="left:534px;top:181px;width:42px">修改(M)</div>
<div class="vt" style="left:543px;top:234px;width:24px">查询</div>
<div class="vt" style="left:543px;top:292px;width:24px">视图</div>
<div class="vt" style="left:519px;top:375px;width:72px">三维动态观察</div>
<svg class="i" style="left:548px;top:440px" width="16" height="4" viewBox="0 0 16 4"><path d="M1 0h1v3H1zM3 2h1v1H3zM5 0h2v1H5zM5 1h1v2H5zM9 0h1v3H9zM11 0h3v1h-3zM12 1h1v2h-1z" fill="#333"/></svg>
<div class="vsb" style="left:549px"></div><div class="vsb" style="left:557px"></div>
<svg class="i" style="left:549px;top:455px" width="16" height="8" viewBox="0 0 16 8"><path d="M5 1v6L2 4zM10 1v6l3-3z" fill="#000"/></svg>
<div id="plist">
<svg class="i" style="left:569px;top:159px" width="34" height="34" viewBox="0 0 34 34"><rect x="4" y="5.700" width="12" height="10" fill="#ececec" stroke="#909090" stroke-width="1.600"/><rect x="18" y="22" width="12" height="9.600" fill="#ecf2fa" stroke="#1f3050" stroke-width="1.800"/><path d="M18.800 11.600h6.200V16" fill="none" stroke="#e8222a" stroke-width="1.800"/><path d="M21.800 15h6.400L25 19.200z" fill="#e8222a"/></svg>
<div class="pl lat" style="top:172px">Move</div>
<svg class="i" style="left:569px;top:197px" width="34" height="34" viewBox="0 0 34 34"><rect x="1.800" y="4.300" width="12.200" height="9.400" fill="#ecf2fa" stroke="#1f3050" stroke-width="1.800"/><rect x="11.800" y="17.800" width="12" height="9.600" fill="#ecf2fa" stroke="#1f3050" stroke-width="1.800"/><rect x="19.800" y="23.800" width="12.200" height="9.800" fill="#ecf2fa" stroke="#1f3050" stroke-width="1.800"/><path d="M17 8h6.200V12.500" fill="none" stroke="#e8222a" stroke-width="1.800"/><path d="M20 11.500h6.400l-3.200 4.200z" fill="#e8222a"/></svg>
<div class="pl" style="top:210px">复制</div>
<svg class="i" style="left:569px;top:235px" width="34" height="34" viewBox="0 0 34 34"><path d="M16.800 31.500H4.200V18H14.500V13A6.700 6.700 0 0 1 28 13V22.500" fill="none" stroke="#1f3050" stroke-width="1.800"/><path d="M16.800 26.800H8.800V22.300H19V13.800A2.500 2.500 0 0 1 24 13.800V20" fill="none" stroke="#9a9a9a" stroke-width="1.600"/></svg>
<div class="pl" style="top:248px">偏移</div>
<svg class="i" style="left:569px;top:273px" width="34" height="34" viewBox="0 0 34 34"><rect x="4.500" y="5" width="27.500" height="28" fill="none" stroke="#a0a0a0" stroke-width="1.900" stroke-dasharray="5 2.500"/><rect x="4.500" y="14.500" width="19.500" height="18.500" fill="none" stroke="#a0a0a0" stroke-width="1.900" stroke-dasharray="5 2.500"/><rect x="4.500" y="23.200" width="12" height="10" fill="#ecf2fa" stroke="#1f3050" stroke-width="1.800"/></svg>
<div class="pl" style="top:286px">比例</div>
<svg class="i" style="left:569px;top:311px" width="34" height="34" viewBox="0 0 34 34"><path d="M7.500 9.500l19 19M26.500 9.500l-19 19" stroke="#d42a0c" stroke-width="4.600" fill="none"/></svg>
<div class="pl" style="top:324px">删除</div>
<svg class="i" style="left:569px;top:349px" width="34" height="34" viewBox="0 0 34 34"><path d="M6.500 10A13.300 13.300 0 1 0 29.500 13.500" fill="none" stroke="#1f68b0" stroke-width="2.700"/><path d="M25 10.500l7.500-1.500-.5 7.500z" fill="#1f68b0"/><path d="M12.500 18.300h9M17 13.800v9" stroke="#e8222a" stroke-width="1.600"/></svg>
<div class="pl" style="top:362px">旋转</div>
<svg class="i" style="left:569px;top:387px" width="34" height="34" viewBox="0 0 34 34"><path d="M7.200 13.200C2 16 2.500 21.500 8 23.800C13 26 21 26 26 23.800C31.500 21.500 31.200 16.500 27.800 14" fill="none" stroke="#1464aa" stroke-width="3.400" transform="translate(0 .5)"/><path d="M22.800 11.200h8.200l-2.200 6.300z" fill="#1464aa"/><path d="M17 3V33" stroke="#ea1420" stroke-width="2" stroke-dasharray="3.800 1.400"/></svg>
<div class="pl" style="top:400px">三维<span class="dots">...</span></div>
<svg class="i" style="left:569px;top:425px" width="34" height="34" viewBox="0 0 34 34"><path d="M13.500 9.500V30.200H3z" fill="#ecf2fa" stroke="#1f3050" stroke-width="1.900"/><path d="M20.500 9.500V30.200H31z" fill="#ecf2fa" stroke="#1f3050" stroke-width="1.900"/><path d="M17 3V35" stroke="#ea1420" stroke-width="2" stroke-dasharray="5 1.800"/></svg>
<div class="pl" style="top:438px">镜像</div>
<svg class="i" style="left:569px;top:463px" width="34" height="34" viewBox="0 0 34 34"><path d="M8 14l4-5.500 3 4M18 12.500l4-4 3 5.500" fill="none" stroke="#2a8a4a" stroke-width="1.500"/><rect x="2" y="12" width="1.500" height="1.500" fill="#e8222a"/></svg>
</div>
<div style="left:565px;top:157px;width:102px;height:1px;background:#8a96a4"></div><div style="left:666.500px;top:157px;width:1px;height:319px;background:#8a96a4"></div><div style="left:565px;top:475px;width:102px;height:1px;background:#8a96a4"></div><div style="left:544px;top:476px;width:124px;height:3px;background:#fff"></div>
<div id="sbar"></div><div id="sthumb"></div>
<svg class="i" style="left:653px;top:164px" width="10" height="7" viewBox="0 0 10 7"><path d="M1 6l4-4 4 4" stroke="#505050" stroke-width="1.600" fill="none"/></svg>
<svg class="i" style="left:653px;top:464px" width="10" height="7" viewBox="0 0 10 7"><path d="M1 1l4 4 4-4" stroke="#505050" stroke-width="1.600" fill="none"/></svg>
<div class="rtb"></div><div class="gh" style="left:671px;top:140px;width:27px"></div>
<svg class="i" style="left:675px;top:147px" width="16" height="16" viewBox="0 0 16 16"><rect x="1.500" y="2.500" width="6" height="5" fill="#f0f0f0" stroke="#909090"/><rect x="8.500" y="10.500" width="6" height="5" fill="#f4f8fd" stroke="#1f3050" stroke-width="1.200"/><path d="M9 5h3.200v2.500" fill="none" stroke="#e8222a" stroke-width="1.200"/><path d="M10.500 7h3.400l-1.700 2.300z" fill="#e8222a"/></svg>
<svg class="i" style="left:675px;top:169px" width="16" height="16" viewBox="0 0 16 16"><rect x="0.500" y="2.500" width="6" height="4.500" fill="#f4f8fd" stroke="#1f3050" stroke-width="1.200"/><rect x="5.500" y="8.500" width="6" height="4.500" fill="#f4f8fd" stroke="#1f3050" stroke-width="1.200"/><rect x="9.500" y="11.500" width="6" height="4.500" fill="#f4f8fd" stroke="#1f3050" stroke-width="1.200"/><path d="M8 4h3.200v2" fill="none" stroke="#e8222a" stroke-width="1.200"/><path d="M9.500 5.800h3.400l-1.700 2.200z" fill="#e8222a"/></svg>
<svg class="i" style="left:675px;top:191px" width="16" height="16" viewBox="0 0 16 16"><path d="M8.500 15.500H1.500V8.500H6.500V6A3.500 3.500 0 0 1 14 6V11" fill="none" stroke="#1f3050" stroke-width="1.300"/><path d="M8.500 12.500H4.500V11H9.500V6.500A1 1 0 0 1 11.500 6.500V10" fill="none" stroke="#9a9a9a" stroke-width="1.100"/></svg>
<svg class="i" style="left:675px;top:213px" width="16" height="16" viewBox="0 0 16 16"><rect x="1.500" y="1.500" width="14" height="14" fill="none" stroke="#8c8c8c" stroke-width="1.100" stroke-dasharray="3 1.500"/><rect x="1.500" y="6" width="10" height="9.500" fill="none" stroke="#8c8c8c" stroke-width="1.100" stroke-dasharray="3 1.500"/><rect x="1.500" y="10.500" width="6" height="5" fill="#f4f8fd" stroke="#1f3050" stroke-width="1.300"/></svg>
<svg class="i" style="left:675px;top:235px" width="16" height="16" viewBox="0 0 16 16"><path d="M2.500 3.500l11 11M13.500 3.500l-11 11" stroke="#dc2a0a" stroke-width="3" fill="none"/></svg>
<div class="sh" style="left:676px;top:258px"></div>
<svg class="i" style="left:675px;top:265px" width="16" height="16" viewBox="0 0 16 16"><path d="M2.500 4A6.500 6.500 0 1 0 14 5.500" fill="none" stroke="#1f68b0" stroke-width="1.700"/><path d="M11.500 4.500l4.500-1-.5 4.500z" fill="#1f68b0"/><path d="M6 8.500h4.500M8.200 6.300v4.500" stroke="#e8222a" stroke-width="1.100"/></svg>
<svg class="i" style="left:675px;top:286px" width="16" height="16" viewBox="0 0 16 16"><path d="M3.500 6.200C1 7.500 1.200 10 3.800 11.200C6 12.200 10 12.200 12.300 11.200C15 10 14.700 7.800 13 6.600" fill="none" stroke="#1464aa" stroke-width="1.800"/><path d="M10.500 5.200h4.200l-1.200 3.300z" fill="#1464aa"/><path d="M8 1V16" stroke="#f01820" stroke-width="1.300" stroke-dasharray="2.500 1"/></svg>
<div class="sh" style="left:676px;top:309px"></div>
<svg class="i" style="left:675px;top:315px" width="16" height="16" viewBox="0 0 16 16"><path d="M6.500 4V14.500H1z" fill="#f4f8fd" stroke="#1f3050" stroke-width="1.300"/><path d="M10 4V14.500H15.500z" fill="#f4f8fd" stroke="#1f3050" stroke-width="1.300"/><path d="M8.200 1V16.500" stroke="#f01820" stroke-width="1.300" stroke-dasharray="2.500 1"/></svg>
<svg class="i" style="left:675px;top:338px" width="16" height="16" viewBox="0 0 16 16"><path d="M1.500 14l3-10.500 3 2.500v9zM14.500 14l-3-10.500-3 2.500v9z" fill="#d8efe0" stroke="#2a8a4a" stroke-width="1.200"/><path d="M4.500 4.500v9.500M11.500 4.500v9.500" stroke="#2a8a4a" stroke-width=".8"/><path d="M1 5l12 11" stroke="#e8222a" stroke-width="1.300"/></svg>
<div class="sh" style="left:676px;top:361px"></div>
<svg class="i" style="left:675px;top:370px" width="16" height="16" viewBox="0 0 16 16"><rect x="3" y="4" width="9" height="9" fill="none" stroke="#777" stroke-dasharray="2 1.500"/><rect x="1.5" y="2.5" width="3" height="3" fill="#1e62c8"/><rect x="10.5" y="2.5" width="3" height="3" fill="#1e62c8"/><rect x="1.5" y="11.5" width="3" height="3" fill="#1e62c8"/><rect x="10.5" y="11.5" width="3" height="3" fill="#1e62c8"/></svg>
<svg class="i" style="left:675px;top:391px" width="16" height="16" viewBox="0 0 16 16"><path d="M2 8.500h11M7.500 3v11M2 3.500h11M2 13.500h11M2.500 3v11M12.500 3v11" stroke="#777" stroke-dasharray="1.500 1.200" fill="none"/><rect x="0.5" y="6.5" width="3" height="3" fill="#1e62c8"/><rect x="0.5" y="12" width="3" height="3" fill="#1e62c8"/><rect x="6" y="12" width="3" height="3" fill="#1e62c8"/><rect x="6" y="1.5" width="3" height="3" fill="#1e62c8"/><rect x="11" y="12" width="3" height="3" fill="#8ab4e8"/><rect x="11" y="6.5" width="3" height="3" fill="#8ab4e8"/><rect x="11" y="1.5" width="3" height="3" fill="#8ab4e8"/><rect x="0.5" y="1.5" width="3" height="3" fill="#8ab4e8"/></svg>
<div class="sh" style="left:676px;top:413px"></div>
<svg class="i" style="left:675px;top:420px" width="16" height="16" viewBox="0 0 16 16"><path d="M2.500 5v9h12V5h-6" fill="none" stroke="#1a7a30" stroke-width="2"/><path d="M5 5.500l3.500-3.500h3.500" fill="none" stroke="#888" stroke-width="1.200"/></svg>
<svg class="i" style="left:675px;top:442px" width="16" height="16" viewBox="0 0 16 16"><rect x="2.500" y="4" width="12" height="10" fill="none" stroke="#1a7a30" stroke-width="2"/><path d="M7 3.500h7.500" stroke="#999" stroke-width="1.500"/></svg>
<svg class="i" style="left:675px;top:464px" width="16" height="16" viewBox="0 0 16 16"><rect x="2.500" y="4" width="7.500" height="8.500" fill="none" stroke="#1a7a30" stroke-width="2"/><path d="M10 4h4.500v8.500H10" fill="none" stroke="#999" stroke-width="1.500"/><path d="M10 0v14" stroke="#444" stroke-width="1.200"/></svg>
<div id="status"></div>
<div class="st" style="left:5px;font-size:12px;top:483px">命令<span style="position:absolute;left:29px">：</span></div>
<div class="ss" style="left:488px"></div>
<div class="ss" style="left:498px"></div>
<div class="ss" style="left:625px"></div>
<div class="ss" style="left:673px"></div>
<div class="st" style="left:504px">0.0,0.0</div><div class="st" style="left:631px">OpenGL</div>
<svg class="i" style="left:679px;top:482px" width="16" height="16" viewBox="0 0 16 16"><path d="M5.700 0V18" stroke="#e6e8ec" stroke-width="1"/><path d="M6.900 2Q8.200 5 8.800 7.500Q9.600 10.500 13.900 16.200L9.500 15.300L6.900 13.400L4.300 15.300L0.200 16.200Q4.200 10.500 5 7.500Q5.600 5 6.900 2z" fill="#fff" stroke="#333" stroke-width="1.200" stroke-linejoin="round"/></svg>
<svg class="i" style="left:692px;top:490px" width="11" height="10" viewBox="0 0 11 10" fill="#8a90a0"><rect x="8" y="1" width="2" height="2"/><rect x="8" y="5" width="2" height="2"/><rect x="4" y="5" width="2" height="2"/><rect x="8" y="9" width="2" height="1"/><rect x="4" y="9" width="2" height="1"/><rect x="0" y="9" width="2" height="1"/></svg>
</body></html>
